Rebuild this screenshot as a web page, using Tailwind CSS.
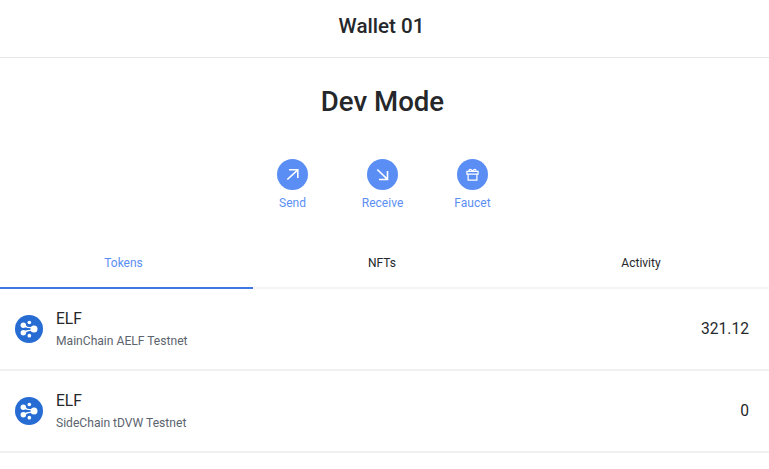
<!DOCTYPE html>
<html lang="en">
<head>
<meta charset="utf-8">
<title>Wallet 01</title>
<script src="https://cdn.jsdelivr.net/npm/@tailwindcss/browser@4"></script>
</head>
<body class="bg-white font-[Roboto,sans-serif] text-[#25272a] w-[769px] h-[469px] overflow-hidden">
<svg class="hidden">
  <symbol id="elf" viewBox="0 0 84 84">
    <circle cx="42" cy="42" r="42" fill="#266cd3"/>
    <g fill="#fff">
      <circle cx="25" cy="31" r="8.2"/><circle cx="25" cy="53" r="8.2"/>
      <circle cx="43" cy="22.5" r="5.5"/><circle cx="43" cy="62" r="5.5"/>
      <circle cx="57" cy="42" r="10.5"/>
      <path d="M30 29Q36 37 50 36.5L49 40Q38 40 28 36ZM30 55Q36 47 50 47.5L49 44Q38 44 28 48Z"/>
    </g>
  </symbol>
</svg>
<header class="h-[58px] border-b border-[#e6e6e7] flex justify-center pr-[6px] pt-[11px]">
  <h1 class="text-[20.6px] leading-[30px] font-medium">Wallet 01</h1>
</header>
<main>
  <h2 class="pt-[24px] pr-[4px] text-center text-[27.6px] leading-[40px] font-medium">Dev Mode</h2>
  <div class="mt-[37px] pr-[4px] flex justify-center gap-[30px] text-[12px] leading-[16px] tracking-[0.02px] text-[#5b8ef4]">
    <button class="w-[60px] flex flex-col items-center gap-[5px]">
      <svg class="w-[31px] h-[31px]" viewBox="0 0 31 31"><circle cx="15.5" cy="15.5" r="15.5" fill="#5b8ef4"/><path d="M10.3 20.5L20.8 10.8M12 10.8H20.8V19" fill="none" stroke="#fff" stroke-width="1.6"/></svg>
      <span>Send</span>
    </button>
    <button class="w-[60px] flex flex-col items-center gap-[5px]">
      <svg class="w-[31px] h-[31px]" viewBox="0 0 31 31"><circle cx="15.5" cy="15.5" r="15.5" fill="#5b8ef4"/><path d="M10.3 10.5L20.5 20.3M12 20.5H20.5V12" fill="none" stroke="#fff" stroke-width="1.6"/></svg>
      <span>Receive</span>
    </button>
    <button class="w-[60px] flex flex-col items-center gap-[5px]">
      <svg class="w-[31px] h-[31px]" viewBox="0 0 31 31"><circle cx="15.5" cy="15.5" r="15.5" fill="#5b8ef4"/><path d="M9.9 12.4H21.1V15.2H9.9ZM11.1 15.2V21.2H19.9V15.2M15.5 12.2C14.5 9.8 11.8 9.6 12.1 12M15.5 12.2C16.5 9.8 19.2 9.6 18.9 12" fill="none" stroke="#fff" stroke-width="1.2"/></svg>
      <span>Faucet</span>
    </button>
  </div>
  <nav class="mt-[27px] h-[51px] grid grid-cols-[253px_258px_258px] text-[12px] text-center leading-[50px]">
    <div class="h-[51px] border-b-2 border-[#3f76e6] text-[#5b8ef4] pr-[6px]">Tokens</div>
    <div class="h-[51px] border-b-2 border-[#f4f4f5]">NFTs</div>
    <div class="h-[51px] border-b-2 border-[#f4f4f5] pl-[2px]">Activity</div>
  </nav>
  <ul>
    <li class="h-[82px] border-b-2 border-[#f0f0f3] flex items-center pl-[14.5px] pr-[20px]">
      <svg class="w-[28px] h-[28px]"><use href="#elf"/></svg>
      <div class="ml-[13.5px] flex-1">
        <div class="text-[15.6px] leading-[22px]">ELF</div>
        <div class="mt-[1px] text-[12.1px] leading-[20px] text-[#5b636d]">MainChain AELF Testnet</div>
      </div>
      <div class="pt-[2px] text-[15.6px]">321.12</div>
    </li>
    <li class="h-[82px] border-b-2 border-[#f0f0f3] flex items-center pl-[14.5px] pr-[20px]">
      <svg class="w-[28px] h-[28px]"><use href="#elf"/></svg>
      <div class="ml-[13.5px] flex-1">
        <div class="text-[15.6px] leading-[22px]">ELF</div>
        <div class="mt-[1px] text-[12.1px] leading-[20px] text-[#5b636d]">SideChain tDVW Testnet</div>
      </div>
      <div class="pt-[2px] text-[15.6px]">0</div>
    </li>
  </ul>
</main>
</body>
</html>
